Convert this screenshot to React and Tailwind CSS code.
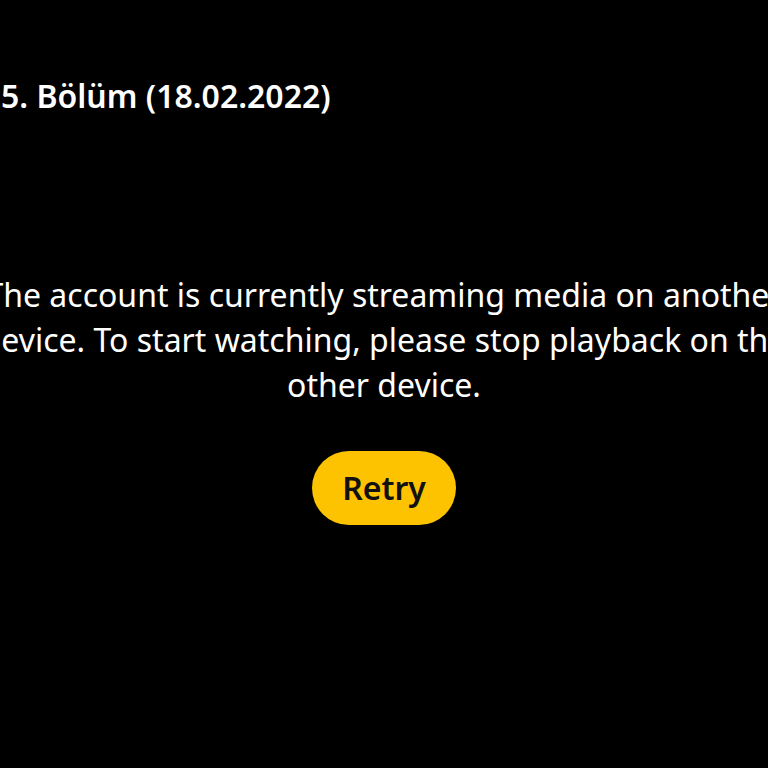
import React from 'react';

const App = () => {
    return (
        <div className="w-[768px] h-[768px] bg-black overflow-hidden text-white" style={{ fontFamily: '"Noto Sans", "Open Sans", sans-serif' }}>
            <h1 className="pt-[74px] pl-[1px] text-[32px] font-semibold leading-[44px] whitespace-nowrap">5. Bölüm (18.02.2022)</h1>

            {/* message is wider than the screen, centred and clipped at both edges */}
            <div className="flex justify-center mt-[154px]">
                <p className="w-[860px] shrink-0 text-center text-[32px] leading-[45px] whitespace-nowrap">
                    The account is currently streaming media on another
                    <br />
                    device. To start watching, please stop playback on the
                    <br />
                    other device.
                </p>
            </div>

            <div className="flex justify-center mt-[44px]">
                <button className="h-[74px] px-[30px] rounded-full bg-[#fdc300] text-[#111111] text-[32px] font-semibold">
                    Retry
                </button>
            </div>
        </div>
    );
};

export default App;
